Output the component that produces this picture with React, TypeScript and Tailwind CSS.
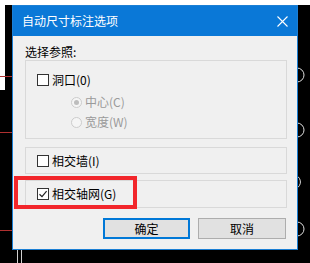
import React from "react";

const font = { fontFamily: '"Noto Sans CJK SC", "Microsoft YaHei", sans-serif' };

function Checkbox({ checked }: { checked?: boolean }) {
  return (
    <div className="w-[12px] h-[12px] border border-[#333333] bg-white flex items-center justify-center shrink-0">
      {checked && (
        <svg width="10" height="10" viewBox="0 0 10 10">
          <path d="M1.5 5.2 L4 7.6 L8.6 2.2" fill="none" stroke="#222" strokeWidth="1.2" />
        </svg>
      )}
    </div>
  );
}

function Radio({ checked }: { checked?: boolean }) {
  return (
    <div className="w-[11px] h-[11px] rounded-full border border-[#cccccc] bg-[#f5f5f5] flex items-center justify-center shrink-0">
      {checked && <div className="w-[5px] h-[5px] rounded-full bg-[#bdbdbd]" />}
    </div>
  );
}

export default function App() {
  return (
    <div className="relative w-[310px] h-[263px] bg-black overflow-hidden flex flex-col" style={font}>
      {/* background drawing decorations */}
      <div className="absolute left-0 top-[76px] w-[12px] h-px bg-[#b03030]" />
      <div className="absolute left-0 top-[132px] w-[12px] h-px bg-[#b03030]" />
      <div className="absolute left-0 top-[230px] w-[12px] h-px bg-[#b03030]" />
      <div className="absolute left-[17px] top-[250px] w-px h-[13px] bg-[#d0d0d0]" />
      <div className="absolute left-[21px] top-[250px] w-px h-[13px] bg-[#d0d0d0]" />
      <svg className="absolute left-[296px] top-0" width="14" height="263" viewBox="0 0 14 263">
        <path d="M1 68 A7 7 0 0 1 1 82" fill="none" stroke="#dddddd" strokeWidth="1" />
        <path d="M1 123 A7 7 0 0 1 1 137" fill="none" stroke="#dddddd" strokeWidth="1" />
        <path d="M1 176 A7 7 0 0 1 1 188" fill="none" stroke="#dddddd" strokeWidth="1" />
        <path d="M1 222 A7 7 0 0 1 1 236" fill="none" stroke="#dddddd" strokeWidth="1" />
      </svg>

      <div className="h-[5px] bg-white shrink-0" />
      <div className="flex">
        <div className="w-[12px] flex shrink-0">
          <div className="w-[5px] h-[85px] bg-white" />
        </div>
        <div className="w-[286px] h-[245px] border border-[#1b7fd4] bg-[#f0f0f0] flex flex-col shrink-0 relative">
          <div className="h-[30px] bg-[#0a78d7] flex items-center justify-between pl-[9px] pr-[9px] shrink-0">
            <span className="text-white text-[12px] leading-none">自动尺寸标注选项</span>
            <svg width="11" height="11" viewBox="0 0 11 11">
              <path d="M0.5 0.5 L10.5 10.5 M10.5 0.5 L0.5 10.5" stroke="white" strokeWidth="1.1" />
            </svg>
          </div>
          <div className="flex flex-col pl-[12px] pr-[10px] pt-[8px]">
            <div className="text-[12px] leading-[16px] text-black h-[16px]">选择参照:</div>
            <div className="mt-[0px] h-[79px] border border-[#d9d9d9] flex flex-col pl-[11px] pt-[12px]">
              <div className="flex items-center gap-[3px] h-[14px]">
                <Checkbox />
                <span className="text-[12px] leading-none text-black">洞口(0)</span>
              </div>
              <div className="flex items-center gap-[3px] h-[14px] mt-[8px] ml-[34px]">
                <Radio checked />
                <span className="text-[12px] leading-none text-[#9a9a9a]">中心(C)</span>
              </div>
              <div className="flex items-center gap-[3px] h-[14px] mt-[6px] ml-[34px]">
                <Radio />
                <span className="text-[12px] leading-none text-[#9a9a9a]">宽度(W)</span>
              </div>
            </div>
            <div className="mt-[8px] h-[27px] border border-[#d9d9d9] flex items-center pl-[11px] gap-[3px]">
              <Checkbox />
              <span className="text-[12px] leading-none text-black">相交墙(I)</span>
            </div>
            <div className="mt-[6px] h-[28px] border border-[#d9d9d9] flex items-center pl-[11px] gap-[3px]">
              <Checkbox checked />
              <span className="text-[12px] leading-none text-black">相交轴网(G)</span>
            </div>
            <div className="mt-[10px] flex justify-end gap-[8px] pr-[1px]">
              <div className="w-[87px] h-[21px] border-2 border-[#0078d7] bg-[#e1e1e1] flex items-center justify-center text-[12px] text-black">
                确定
              </div>
              <div className="w-[88px] h-[21px] border border-[#adadad] bg-[#e1e1e1] flex items-center justify-center text-[12px] text-black">
                取消
              </div>
            </div>
          </div>
          {/* red highlight overlay */}
          <div className="absolute left-[1px] top-[170px] w-[123px] h-[33px] border-[4px] border-[#f2262b]" />
        </div>
        <div className="w-[12px] shrink-0" />
      </div>
    </div>
  );
}
